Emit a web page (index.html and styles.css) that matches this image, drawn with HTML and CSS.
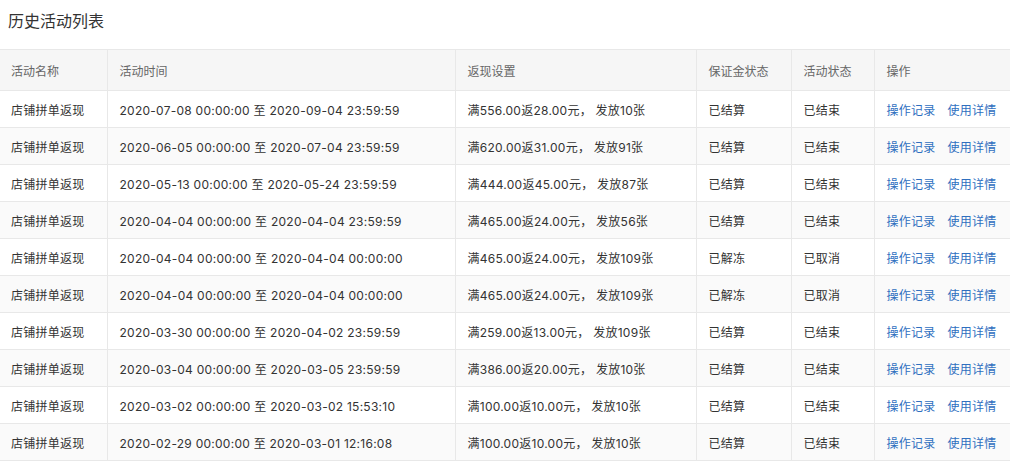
FILE: index.html
```html
<!DOCTYPE html>
<html lang="zh-CN">
<head>
<meta charset="utf-8">
<title>历史活动列表</title>
<link rel="stylesheet" href="styles.css">
</head>
<body>
<div class="page">
  <h1 class="title">历史活动列表</h1>
  <table class="list">
    <colgroup>
      <col class="c1"><col class="c2"><col class="c3"><col class="c4"><col class="c5"><col class="c6">
    </colgroup>
    <thead>
      <tr><th>活动名称</th><th>活动时间</th><th>返现设置</th><th>保证金状态</th><th>活动状态</th><th>操作</th></tr>
    </thead>
    <tbody>
      <tr><td>店铺拼单返现</td><td>2020-07-08 00:00:00 至 2020-09-04 23:59:59</td><td>满556.00返28.00元， 发放10张</td><td>已结算</td><td>已结束</td><td class="ops"><a>操作记录</a><a>使用详情</a></td></tr>
      <tr><td>店铺拼单返现</td><td>2020-06-05 00:00:00 至 2020-07-04 23:59:59</td><td>满620.00返31.00元， 发放91张</td><td>已结算</td><td>已结束</td><td class="ops"><a>操作记录</a><a>使用详情</a></td></tr>
      <tr><td>店铺拼单返现</td><td>2020-05-13 00:00:00 至 2020-05-24 23:59:59</td><td>满444.00返45.00元， 发放87张</td><td>已结算</td><td>已结束</td><td class="ops"><a>操作记录</a><a>使用详情</a></td></tr>
      <tr><td>店铺拼单返现</td><td>2020-04-04 00:00:00 至 2020-04-04 23:59:59</td><td>满465.00返24.00元， 发放56张</td><td>已结算</td><td>已结束</td><td class="ops"><a>操作记录</a><a>使用详情</a></td></tr>
      <tr><td>店铺拼单返现</td><td>2020-04-04 00:00:00 至 2020-04-04 00:00:00</td><td>满465.00返24.00元， 发放109张</td><td>已解冻</td><td>已取消</td><td class="ops"><a>操作记录</a><a>使用详情</a></td></tr>
      <tr><td>店铺拼单返现</td><td>2020-04-04 00:00:00 至 2020-04-04 00:00:00</td><td>满465.00返24.00元， 发放109张</td><td>已解冻</td><td>已取消</td><td class="ops"><a>操作记录</a><a>使用详情</a></td></tr>
      <tr><td>店铺拼单返现</td><td>2020-03-30 00:00:00 至 2020-04-02 23:59:59</td><td>满259.00返13.00元， 发放109张</td><td>已结算</td><td>已结束</td><td class="ops"><a>操作记录</a><a>使用详情</a></td></tr>
      <tr><td>店铺拼单返现</td><td>2020-03-04 00:00:00 至 2020-03-05 23:59:59</td><td>满386.00返20.00元， 发放10张</td><td>已结算</td><td>已结束</td><td class="ops"><a>操作记录</a><a>使用详情</a></td></tr>
      <tr><td>店铺拼单返现</td><td>2020-03-02 00:00:00 至 2020-03-02 15:53:10</td><td>满100.00返10.00元， 发放10张</td><td>已结算</td><td>已结束</td><td class="ops"><a>操作记录</a><a>使用详情</a></td></tr>
      <tr><td>店铺拼单返现</td><td>2020-02-29 00:00:00 至 2020-03-01 12:16:08</td><td>满100.00返10.00元， 发放10张</td><td>已结算</td><td>已结束</td><td class="ops"><a>操作记录</a><a>使用详情</a></td></tr>
    </tbody>
  </table>
</div>
</body>
</html>
```

FILE: styles.css
```css
html, body {
  margin: 0;
  padding: 0;
  background: #fff;
}
.page {
  font-family: Inter, "Noto Sans CJK SC", sans-serif;
  color: #333;
  font-size: 12px;
}
.title {
  margin: 0;
  padding: 0 0 0 8px;
  height: 49px;
  line-height: 43px;
  font-size: 16px;
  font-weight: normal;
  color: #333;
}
.list {
  width: 1010px;
  border-collapse: collapse;
  table-layout: fixed;
}
.c1 { width: 107px; }
.c2 { width: 348px; }
.c3 { width: 241px; }
.c4 { width: 95px; }
.c5 { width: 83px; }
.c6 { width: 136px; }
.list th,
.list td {
  text-align: left;
  font-weight: normal;
  white-space: nowrap;
  padding: 0 0 0 12px;
  border-left: 1px solid #e8e8e8;
  border-bottom: 1px solid #e8e8e8;
}
.list th:first-child,
.list td:first-child {
  border-left: none;
  padding-left: 11px;
}
.list thead th {
  height: 40px;
  background: #f6f6f6;
  color: #666;
  border-top: 1px solid #e8e8e8;
}
.list tbody td {
  height: 36px;
  letter-spacing: 0.25px;
}
.list tbody tr:nth-child(even) td {
  background: #fafafa;
}
.ops a {
  color: #2f6fbf;
  margin-right: 12px;
  cursor: pointer;
}
```
